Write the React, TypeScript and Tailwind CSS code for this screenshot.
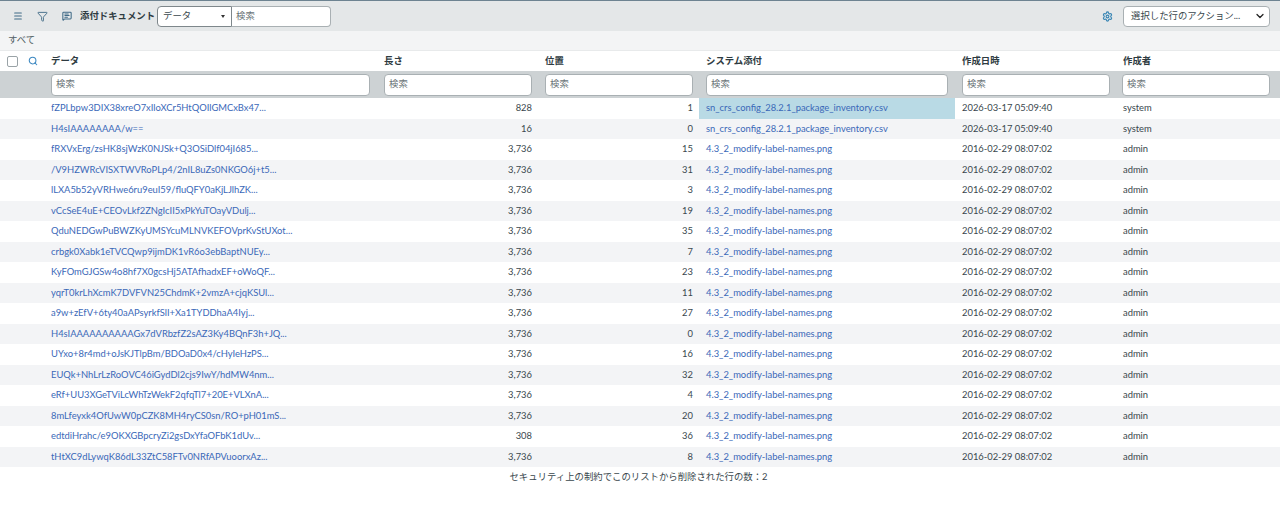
import { ChevronDown, Filter, Menu, MessageSquareText, Search, Settings } from "lucide-react";

const columns = "grid grid-cols-[44px_333px_161px_161px_256px_161px_164px]";

const rows = [
  ["fZPLbpw3DIX38xreO7xIloXCr5HtQOIlGMCxBx47...", "828", "1", "sn_crs_config_28.2.1_package_inventory.csv", "2026-03-17 05:09:40", "system"],
  ["H4sIAAAAAAAA/w==", "16", "0", "sn_crs_config_28.2.1_package_inventory.csv", "2026-03-17 05:09:40", "system"],
  ["fRXVxErg/zsHK8sjWzK0NJSk+Q3OSiDlf04jI685...", "3,736", "15", "4.3_2_modify-label-names.png", "2016-02-29 08:07:02", "admin"],
  ["/V9HZWRcVISXTWVRoPLp4/2nIL8uZs0NKGO6j+t5...", "3,736", "31", "4.3_2_modify-label-names.png", "2016-02-29 08:07:02", "admin"],
  ["lLXA5b52yVRHwe6ru9euI59/fluQFY0aKjLJlhZK...", "3,736", "3", "4.3_2_modify-label-names.png", "2016-02-29 08:07:02", "admin"],
  ["vCcSeE4uE+CEOvLkf2ZNgIcII5xPkYuTOayVDulj...", "3,736", "19", "4.3_2_modify-label-names.png", "2016-02-29 08:07:02", "admin"],
  ["QduNEDGwPuBWZKyUMSYcuMLNVKEFOVprKvStUXot...", "3,736", "35", "4.3_2_modify-label-names.png", "2016-02-29 08:07:02", "admin"],
  ["crbgk0Xabk1eTVCQwp9ijmDK1vR6o3ebBaptNUEy...", "3,736", "7", "4.3_2_modify-label-names.png", "2016-02-29 08:07:02", "admin"],
  ["KyFOmGJGSw4o8hf7X0gcsHj5ATAfhadxEF+oWoQF...", "3,736", "23", "4.3_2_modify-label-names.png", "2016-02-29 08:07:02", "admin"],
  ["yqrT0krLhXcmK7DVFVN25ChdmK+2vmzA+cjqKSUl...", "3,736", "11", "4.3_2_modify-label-names.png", "2016-02-29 08:07:02", "admin"],
  ["a9w+zEfV+6ty40aAPsyrkfSlI+Xa1TYDDhaA4Iyj...", "3,736", "27", "4.3_2_modify-label-names.png", "2016-02-29 08:07:02", "admin"],
  ["H4sIAAAAAAAAAAGx7dVRbzfZ2sAZ3Ky4BQnF3h+JQ...", "3,736", "0", "4.3_2_modify-label-names.png", "2016-02-29 08:07:02", "admin"],
  ["UYxo+8r4md+oJsKJTlpBm/BDOaD0x4/cHyIeHzPS...", "3,736", "16", "4.3_2_modify-label-names.png", "2016-02-29 08:07:02", "admin"],
  ["EUQk+NhLrLzRoOVC46iGydDl2cjs9IwY/hdMW4nm...", "3,736", "32", "4.3_2_modify-label-names.png", "2016-02-29 08:07:02", "admin"],
  ["eRf+UU3XGeTViLcWhTzWekF2qfqTl7+20E+VLXnA...", "3,736", "4", "4.3_2_modify-label-names.png", "2016-02-29 08:07:02", "admin"],
  ["8mLfeyxk4OfUwW0pCZK8MH4ryCS0sn/RO+pH01mS...", "3,736", "20", "4.3_2_modify-label-names.png", "2016-02-29 08:07:02", "admin"],
  ["edtdiHrahc/e9OKXGBpcryZi2gsDxYfaOFbK1dUv...", "308", "36", "4.3_2_modify-label-names.png", "2016-02-29 08:07:02", "admin"],
  ["tHtXC9dLywqK86dL33ZtC58FTv0NRfAPVuoorxAz...", "3,736", "8", "4.3_2_modify-label-names.png", "2016-02-29 08:07:02", "admin"],
];

const headers = ["データ", "長さ", "位置", "システム添付", "作成日時", "作成者"];

function SearchBox() {
  return (
    <div className="h-[22px] bg-white border border-[#a9b0b3] rounded-[4px] pl-[4px] flex items-center text-[#6b7478]">
      検索
    </div>
  );
}

export default function App() {
  return (
    <div className="w-[1280px] h-[518px] overflow-hidden bg-white text-[9.4px] text-[#39474d] font-['Lato','Noto_Sans_CJK_JP',sans-serif]">
      <div className="h-px bg-[#6d8391]" />
      <div className="h-[30px] bg-[#e4e7e8] flex items-center">
        <Menu className="w-[10px] h-[10px] ml-[13px] text-[#3f6a86]" strokeWidth={2.5} />
        <Filter className="w-[11px] h-[11px] ml-[14px] text-[#3f6a86]" strokeWidth={2} />
        <MessageSquareText className="w-[10px] h-[10px] ml-[14px] text-[#3f6a86]" strokeWidth={2.5} />
        <span className="ml-[8px] font-bold text-[#2e3b41] whitespace-nowrap">添付ドキュメント</span>
        <div className="ml-[2px] h-[21px] w-[75px] bg-white border border-[#7e878b] rounded-l-[4px] flex items-center justify-between pl-[5px] pr-[6px]">
          データ
          <span className="w-0 h-0 border-x-[2.5px] border-x-transparent border-t-[3px] border-t-[#333]" />
        </div>
        <div className="h-[21px] w-[99px] bg-white border border-l-0 border-[#a9b0b3] rounded-r-[4px] flex items-center pl-[4px] text-[#6b7478]">
          検索
        </div>
        <Settings className="w-[11px] h-[11px] ml-auto text-[#3a87b5]" strokeWidth={2.5} />
        <div className="ml-[10px] mr-[10px] h-[21px] w-[147px] bg-white border border-[#a9b0b3] rounded-[4px] flex items-center justify-between pl-[7px] pr-[3px] whitespace-nowrap">
          選択した行のアクション...
          <ChevronDown className="w-[12px] h-[12px] text-[#222]" strokeWidth={2.5} />
        </div>
      </div>
      <div className="h-[19px] bg-[#f3f4f5] flex items-center pl-2 text-[#515e63]">すべて</div>
      <div className="h-px bg-[#e8eaeb]" />
      <div className={`${columns} h-5 items-center font-bold text-[#2e3b41]`}>
        <div className="flex items-center pl-[7px]">
          <div className="w-[11px] h-[11px] border border-[#9aa3a7] rounded-[2px] bg-white" />
          <Search className="w-[10px] h-[10px] ml-[10px] text-[#3a87c0]" strokeWidth={2.5} />
        </div>
        {headers.map((h) => (
          <div key={h} className="pl-[7px]">{h}</div>
        ))}
      </div>
      <div className={`${columns} h-[27px] items-center bg-[#cdd2d4]`}>
        <div />
        <div className="pl-[7px] pr-[7px]"><SearchBox /></div>
        <div className="pl-[7px] pr-[6px]"><SearchBox /></div>
        <div className="pl-[7px] pr-[6px]"><SearchBox /></div>
        <div className="pl-[7px] pr-[7px]"><SearchBox /></div>
        <div className="pl-[7px] pr-[6px]"><SearchBox /></div>
        <div className="pl-[6px] pr-[10px]"><SearchBox /></div>
      </div>
      {rows.map((row, i) => (
        <div key={i} className={`${columns} h-[20.5px] items-stretch ${i % 2 === 1 ? "bg-[#f3f4f6]" : "bg-white"}`}>
          <div />
          <div className="pl-[7px] flex items-center text-[#3a68b8] whitespace-nowrap">{row[0]}</div>
          <div className="pr-[6px] flex items-center justify-end">{row[1]}</div>
          <div className="pr-[6px] flex items-center justify-end">{row[2]}</div>
          <div className={`pl-[7px] flex items-center text-[#3a68b8] whitespace-nowrap ${i === 0 ? "bg-[#b9dae5]" : ""}`}>{row[3]}</div>
          <div className="pl-[7px] flex items-center">{row[4]}</div>
          <div className="pl-[7px] flex items-center">{row[5]}</div>
        </div>
      ))}
      <div className="h-5 flex items-center justify-center pr-[3px]">
        セキュリティ上の制約でこのリストから削除された行の数：2
      </div>
    </div>
  );
}
